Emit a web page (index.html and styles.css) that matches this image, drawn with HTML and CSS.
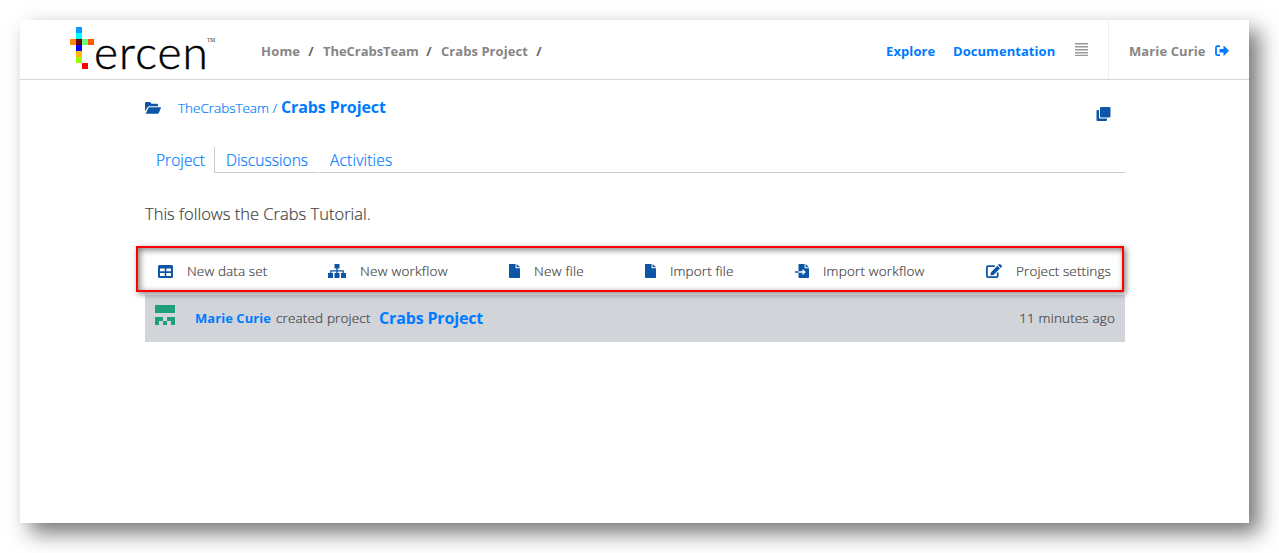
FILE: index.html
```html
<!DOCTYPE html>
<html lang="en">
<head>
<meta charset="utf-8">
<title>Tercen - Crabs Project</title>
<link rel="stylesheet" href="styles.css">
</head>
<body>
<div class="window">
  <header class="header">
    <a class="logo">
      <svg class="logo-mark" width="24" height="42" viewBox="0 0 24 42" shape-rendering="crispEdges">
        <path fill="#0a9aff" d="M6 0h6v6H6z"/><path fill="#0ff" d="M6 6h6v6H6z"/>
        <path fill="#ff8a0a" d="M0 12h6v6H0z"/><path fill="#6b0000" d="M6 12h6v6H6z"/>
        <path fill="#66ff80" d="M12 12h6v6h-6z"/><path fill="#ff5a00" d="M18 12h6v6h-6z"/>
        <path fill="#00f" d="M6 18h6v6H6z"/><path fill="#ffb800" d="M6 24h6v6H6z"/>
        <path fill="#9f0" d="M6 30h6v6H6z"/><path fill="#f00" d="M12 36h6v6h-6z"/>
      </svg>
      <span class="logo-text">ercen</span>
      <span class="logo-tm">TM</span>
    </a>
    <nav class="crumbs">
      <a class="crumb-home">Home</a><i>/</i><a class="crumb-team">TheCrabsTeam</a><i>/</i><a class="crumb-project">Crabs Project</a><i>/</i>
    </nav>
    <nav class="links">
      <a class="explore">Explore</a>
      <a class="docs">Documentation</a>
      <svg class="menu" width="13" height="13" viewBox="0 0 13 13"><path d="M0 0h13v1.500H0zM0 3h13v1.500H0zM0 6h13v1.500H0zM0 9h13v1.500H0zM0 11.700h13V13H0z" fill="#999"/></svg>
    </nav>
    <div class="user">
      <span class="user-name">Marie Curie</span>
      <svg width="14" height="12" viewBox="0 0 14 12"><path fill="none" stroke="#007bff" stroke-width="1.8" d="M5 1.2H2.4Q1 1.2 1 2.6v6.2q0 1.4 1.4 1.4H5"/><path fill="#007bff" d="M4.500 3.900h4V1.100q0-.8.7-.2l4.400 4.400q.4.400 0 .9L9.200 10.600q-.7.6-.7-.3V7.600h-4z"/></svg>
    </div>
  </header>
  <main class="content">
    <div class="title-row">
      <svg class="folder" width="16" height="12" viewBox="0 0 16 12"><path fill="#0d56a6" d="M0 9.200V1.300Q0 0 1.300 0H5l1.600 1.700h5.200q1.300 0 1.300 1.300v1.300H4.400q-1.200 0-1.800 1z"/><path fill="#0d56a6" d="M.7 11.700 3.400 6q.4-.8 1.200-.8h10.700q1 0 .6.800L13.800 11q-.3.800-1.300.8H1z"/></svg>
      <span class="owner">TheCrabsTeam /</span>
      <strong class="project-name">Crabs Project</strong>
      <svg class="clone" width="15" height="15" viewBox="0 0 15 15"><rect x="4" y="0" width="10.500" height="10.500" rx="1" fill="#0d56a6"/><path fill="#0d56a6" d="M3 3H1.500Q.5 3 .5 4v9q0 1 1 1H10q1 0 1-1v-1.500H4q-1 0-1-1z"/></svg>
    </div>
    <nav class="tabs">
      <a class="tab active"><span>Project</span></a>
      <a class="tab second"><span>Discussions</span></a>
      <a class="tab rest"><span>Activities</span></a>
    </nav>
    <p class="description"><span>This follows the Crabs Tutorial.</span></p>
    <div class="toolbar">
      <a class="tool dataset"><svg width="15" height="13" viewBox="0 0 15 13"><path fill="#0d56a6" fill-rule="evenodd" d="M1.500 0h12Q15 0 15 1.500v10q0 1.500-1.500 1.500h-12Q0 13 0 11.500v-10Q0 0 1.500 0zM2 3.500v2.700h4.700V3.500zm6.300 0v2.700H13V3.500zM2 8v3h4.700V8zm6.300 0v3H13V8z"/></svg><span>New data set</span></a>
      <a class="tool workflow"><svg width="18" height="14" viewBox="0 0 18 14"><path fill="#0d56a6" d="M6.500 0h5v4.600H9.700v1.700h6.100V9H18v5h-5V9h1.500V7.600H9.700V9h1.800v5h-5V9h1.800V7.600H3.500V9H5v5H0V9h2.200V6.300h6.100V4.600H6.500z"/></svg><span>New workflow</span></a>
      <a class="tool newfile"><svg width="11" height="14" viewBox="0 0 11 14"><path fill="#0d56a6" d="M.7 0h5.900v4.200H11v9.100q0 .7-.7.7H.7Q0 14 0 13.300V.7Q0 0 .7 0zM7.600 0 11 3.300H7.600z"/></svg><span>New file</span></a>
      <a class="tool importfile"><svg width="11" height="14" viewBox="0 0 11 14"><path fill="#0d56a6" d="M.7 0h5.900v4.200H11v9.100q0 .7-.7.7H.7Q0 14 0 13.300V.7Q0 0 .7 0zM7.600 0 11 3.300H7.600z"/></svg><span>Import file</span></a>
      <a class="tool importflow"><svg width="14" height="14" viewBox="0 0 14 14"><path fill="#0d56a6" d="M4.200 0h5.400v4.200H14v9.100q0 .7-.7.7H4.200q-.7 0-.7-.7V.7q0-.7.7-.7zM10.600 0 14 3.300h-3.400zM0 7.300h3.500v1.500H0z"/><path fill="#fff" d="M3.500 7.300h4V5l3.300 3-3.300 3.200V8.800h-4z"/></svg><span>Import workflow</span></a>
      <a class="tool settings"><svg width="16" height="14" viewBox="0 0 16 14"><path fill="none" stroke="#0d56a6" stroke-width="1.800" d="M8.800 2.200H2Q.9 2.200.9 3.300v8.700q0 1.100 1.100 1.100h8.600q1.100 0 1.100-1.100V8.500"/><path fill="#0d56a6" d="m11.300 1.800 2.700 2.700L7.500 11l-3 .4.300-3zM12 1.100l.8-.8q.8-.6 1.500 0L15.600 1.600q.7.700 0 1.500l-.9.800z"/></svg><span>Project settings</span></a>
    </div>
    <div class="activity">
      <svg width="20" height="20" viewBox="0 0 20 20" shape-rendering="crispEdges"><path fill="#1fa07a" d="M0 0h20v8H0zM0 12h8v4H4v4H0zM12 12h8v8h-4v-4h-4zM8 16h4v4H8z"/></svg>
      <strong class="actor">Marie Curie</strong>
      <span class="action">created project</span>
      <strong class="target">Crabs Project</strong>
      <span class="time">11 minutes ago</span>
    </div>
  </main>
</div>
</body>
</html>
```
FILE: styles.css
```css
body { margin: 0; padding: 20px 30px 30px 20px; background: #fff; font-family: "Open Sans", "Noto Sans", sans-serif; font-size: 13.5px; font-weight: 300; color: #444; overflow: hidden; }
.window { height: 503px; background: #fff; box-shadow: 10px 10px 20px rgba(0, 0, 0, .54); }
.header { display: flex; align-items: center; height: 59px; border-bottom: 1px solid #d5d5d5; font-size: 13px; font-weight: 700; white-space: nowrap; }
.logo { display: flex; width: 191px; height: 59px; padding-left: 50px; box-sizing: border-box; color: #000; }
.logo-mark { margin-top: 7px; flex: none; }
.logo-text { width: 113px; margin-top: 6px; font: 300 46px/52px Lato, sans-serif; letter-spacing: 1.1px; -webkit-text-stroke: .5px #000; }
.logo-tm { margin-top: 17px; font: 5.500px/7px "Liberation Serif", serif; color: #333; }
.crumbs { display: flex; margin-left: 50px; color: #868686; line-height: 20px; margin-top: 2px; }
.crumbs i { font-style: normal; color: #666; width: 20px; text-align: center; margin-right: 2px; }
.crumb-home { width: 40px; letter-spacing: .2px; }
.crumb-team { width: 96px; letter-spacing: -.05px; }
.crumb-project { width: 88px; letter-spacing: .05px; }
.links { display: flex; align-items: center; margin-left: auto; color: #007bff; margin-top: 2px; }
.explore { width: 67px; letter-spacing: .1px; }
.docs { width: 122px; letter-spacing: .05px; }
.menu { margin: -2px 20px 0 0; }
.user { display: flex; align-items: center; width: 141px; height: 59px; padding: 2px 0 0 20px; box-sizing: border-box; border-left: 1px solid #eee; color: #868686; }
.user-name { width: 86px; letter-spacing: .1px; }
.content { width: 980px; margin: 0 auto 0 125px; }
.title-row { display: flex; align-items: center; height: 56px; color: #007bff; white-space: nowrap; }
.folder { margin-right: 17px; flex: none; }
.owner { width: 103px; letter-spacing: -.02px; }
.project-name { font-size: 16px; letter-spacing: -.1px; margin-top: -2px; }
.clone { margin: 12px 14px 0 auto; }
.tabs { display: flex; height: 26px; margin-top: 11px; color: #007bff; font-size: 15.500px; line-height: 26px; letter-spacing: .05px; }
.tab { box-sizing: border-box; padding-left: 11px; border-bottom: 1px solid #ccc; white-space: nowrap; }
.active { width: 70px; border-right: 1px solid #ccc; border-bottom: 0; }
.second { width: 103px; margin-right: 1px; }
.rest { flex: 1; letter-spacing: .2px; }
.description { margin: 29px 0 20px; font-size: 16.500px; line-height: 24px; }
.toolbar { position: relative; z-index: 1; display: flex; align-items: center; box-sizing: border-box; width: 988px; height: 46px; margin-left: -9px; padding-top: 4px; border: 2px solid #f00; box-shadow: 2px 2px 6px rgba(0, 0, 0, .5), inset 2px 2px 6px rgba(0, 0, 0, .5); white-space: nowrap; }
.tool { display: flex; align-items: center; box-sizing: border-box; gap: 14px; letter-spacing: .12px; }
.tool svg { flex: none; }
.dataset { width: 190px; padding-left: 20px; }
.workflow { width: 181px; letter-spacing: .25px; }
.newfile { width: 136px; letter-spacing: .25px; }
.importfile { width: 150px; }
.importflow { width: 191px; letter-spacing: .18px; }
.activity { display: flex; align-items: center; height: 47px; margin-top: 3px; padding: 0 10px 2px; box-sizing: border-box; background: #d1d5da; white-space: nowrap; }
.activity svg { margin: -5px 20px 0 0; }
.actor { width: 81px; color: #007bff; font-size: 13px; font-weight: 700; letter-spacing: .05px; }
.action { width: 103px; letter-spacing: .15px; }
.target { color: #007bff; font-size: 16px; letter-spacing: -.15px; }
.time { margin-left: auto; letter-spacing: .15px; }
.project-name, .target { font-weight: 700; }
.owner, .tabs, .description, .tool, .action, .time { -webkit-text-stroke: .2px currentColor; }
```
